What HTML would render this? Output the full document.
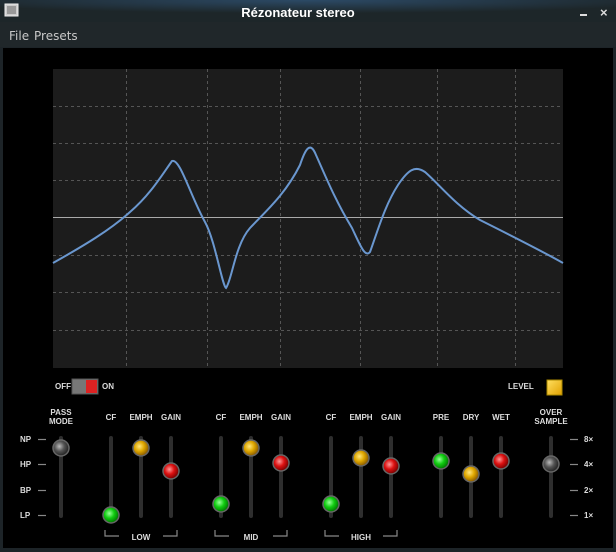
<!DOCTYPE html>
<html><head><meta charset="utf-8"><style>
body{margin:0;width:616px;height:552px;overflow:hidden;background:#1d2428;font-family:"Liberation Sans",sans-serif}
</style></head><body>
<svg width="616" height="552" xmlns="http://www.w3.org/2000/svg" style="position:absolute;left:0;top:0">
<defs>
<radialGradient id="tb" cx="0.5" cy="0" r="0.6"><stop offset="0" stop-color="#2c4a66"/><stop offset="1" stop-color="#1d2629"/></radialGradient>
<radialGradient id="kg" cx="0.4" cy="0.4" r="0.6"><stop offset="0" stop-color="#9f9"/><stop offset="0.5" stop-color="#1c1"/><stop offset="1" stop-color="#070"/></radialGradient>
<radialGradient id="ky" cx="0.4" cy="0.4" r="0.6"><stop offset="0" stop-color="#ffe680"/><stop offset="0.5" stop-color="#e0a800"/><stop offset="1" stop-color="#8a5a00"/></radialGradient>
<radialGradient id="kr" cx="0.4" cy="0.4" r="0.6"><stop offset="0" stop-color="#f99"/><stop offset="0.5" stop-color="#d11"/><stop offset="1" stop-color="#700"/></radialGradient>
<radialGradient id="kk" cx="0.4" cy="0.4" r="0.6"><stop offset="0" stop-color="#bbb"/><stop offset="0.5" stop-color="#555"/><stop offset="1" stop-color="#222"/></radialGradient>
<linearGradient id="lv" x1="0" y1="0" x2="1" y2="1"><stop offset="0" stop-color="#ffe060"/><stop offset="1" stop-color="#e0a000"/></linearGradient>
</defs>
<rect x="0" y="0" width="616" height="552" fill="#1d2428"/>
<rect x="0" y="0" width="616" height="22" fill="url(#tb)"/>
<rect x="5" y="4" width="13" height="12" fill="#ccc" stroke="#eee" stroke-width="1"/>
<rect x="7" y="6" width="9" height="8" fill="#999"/>
<text x="298" y="17" text-anchor="middle" font-size="13" font-weight="bold" fill="#fff">Rézonateur stereo</text>
<rect x="580" y="14" width="7" height="2" fill="#ddd"/>
<text x="600" y="17" font-size="13" font-weight="bold" fill="#ddd">×</text>
<rect x="0" y="22" width="616" height="25" fill="#20272a"/>
<text x="9" y="40" font-size="12" fill="#c8c8c8" font-family="DejaVu Sans, sans-serif">File</text>
<text x="34" y="40" font-size="12" fill="#c8c8c8" font-family="DejaVu Sans, sans-serif">Presets</text>
<rect x="3" y="48" width="610" height="500" fill="#000"/>
<rect x="53" y="69" width="510" height="299" fill="#1c1c1c"/>
<g stroke="#555" stroke-width="1" stroke-dasharray="3,3">
<line x1="53" y1="106.5" x2="563" y2="106.5"/><line x1="53" y1="143.5" x2="563" y2="143.5"/><line x1="53" y1="180.5" x2="563" y2="180.5"/>
<line x1="53" y1="255.5" x2="563" y2="255.5"/><line x1="53" y1="292.5" x2="563" y2="292.5"/><line x1="53" y1="330.5" x2="563" y2="330.5"/>
<line x1="126.5" y1="69" x2="126.5" y2="368"/><line x1="207.5" y1="69" x2="207.5" y2="368"/><line x1="280.5" y1="69" x2="280.5" y2="368"/>
<line x1="360.5" y1="69" x2="360.5" y2="368"/><line x1="437.5" y1="69" x2="437.5" y2="368"/><line x1="515.5" y1="69" x2="515.5" y2="368"/>
</g>
<line x1="53" y1="217.5" x2="563" y2="217.5" stroke="#aaa" stroke-width="1"/>
<path d="M53,263 C85,245 110,230 130,212 C150,195 162,175 172,161 C180,158 190,195 205,222 C215,240 222,285 226,288 C232,280 235,245 250,228 C265,212 285,195 300,165 C305,150 310,140 316,155 C325,175 335,200 352,228 C360,245 365,258 370,252 C378,230 385,205 398,185 C408,170 415,165 425,172 C440,185 455,205 480,220 C510,235 540,250 563,263" fill="none" stroke="#6a97cf" stroke-width="2"/>
<g font-size="8" font-weight="bold" fill="#ddd">
<text x="55" y="389">OFF</text><text x="102" y="389">ON</text>
<text x="508" y="389">LEVEL</text>
</g>
<rect x="72" y="379" width="26" height="15" fill="#777" stroke="#555"/>
<rect x="86" y="380" width="11" height="13" fill="#d22"/>
<rect x="547" y="380" width="15" height="15" fill="url(#lv)" stroke="#a80"/>
<g font-size="8" font-weight="bold" fill="#ddd" text-anchor="middle">
<text x="61" y="415">PASS</text><text x="61" y="424">MODE</text>
<text x="111" y="420">CF</text><text x="141" y="420">EMPH</text><text x="171" y="420">GAIN</text>
<text x="221" y="420">CF</text><text x="251" y="420">EMPH</text><text x="281" y="420">GAIN</text>
<text x="331" y="420">CF</text><text x="361" y="420">EMPH</text><text x="391" y="420">GAIN</text>
<text x="441" y="420">PRE</text><text x="471" y="420">DRY</text><text x="501" y="420">WET</text>
<text x="551" y="415">OVER</text><text x="551" y="424">SAMPLE</text>
<text x="141" y="540">LOW</text><text x="251" y="540">MID</text><text x="361" y="540">HIGH</text>
</g>
<g font-size="8" font-weight="bold" fill="#ddd">
<text x="20" y="442">NP</text><text x="20" y="467">HP</text><text x="20" y="493">BP</text><text x="20" y="518">LP</text>
<text x="584" y="442">8×</text><text x="584" y="467">4×</text><text x="584" y="493">2×</text><text x="584" y="518">1×</text>
</g>
<g stroke="#888" stroke-width="1.2">
<line x1="38" y1="439.5" x2="46" y2="439.5"/><line x1="38" y1="464.5" x2="46" y2="464.5"/><line x1="38" y1="490.5" x2="46" y2="490.5"/><line x1="38" y1="515.5" x2="46" y2="515.5"/>
<line x1="570" y1="439.5" x2="578" y2="439.5"/><line x1="570" y1="464.5" x2="578" y2="464.5"/><line x1="570" y1="490.5" x2="578" y2="490.5"/><line x1="570" y1="515.5" x2="578" y2="515.5"/>
</g>
<g fill="none" stroke="#888" stroke-width="1.2">
<path d="M105,530 V536 H119 M163,536 H177 V530"/>
<path d="M215,530 V536 H229 M273,536 H287 V530"/>
<path d="M325,530 V536 H339 M383,536 H397 V530"/>
</g>
<g fill="#2e2e2e">
<rect x="59" y="436" width="4" height="82" rx="2"/>
<rect x="109" y="436" width="4" height="82" rx="2"/><rect x="139" y="436" width="4" height="82" rx="2"/><rect x="169" y="436" width="4" height="82" rx="2"/>
<rect x="219" y="436" width="4" height="82" rx="2"/><rect x="249" y="436" width="4" height="82" rx="2"/><rect x="279" y="436" width="4" height="82" rx="2"/>
<rect x="329" y="436" width="4" height="82" rx="2"/><rect x="359" y="436" width="4" height="82" rx="2"/><rect x="389" y="436" width="4" height="82" rx="2"/>
<rect x="439" y="436" width="4" height="82" rx="2"/><rect x="469" y="436" width="4" height="82" rx="2"/><rect x="499" y="436" width="4" height="82" rx="2"/>
<rect x="549" y="436" width="4" height="82" rx="2"/>
</g>
<g stroke="#666" stroke-width="1.5">
<circle cx="61" cy="448" r="8" fill="url(#kk)"/>
<circle cx="111" cy="515" r="8" fill="url(#kg)"/><circle cx="141" cy="448" r="8" fill="url(#ky)"/><circle cx="171" cy="471" r="8" fill="url(#kr)"/>
<circle cx="221" cy="504" r="8" fill="url(#kg)"/><circle cx="251" cy="448" r="8" fill="url(#ky)"/><circle cx="281" cy="463" r="8" fill="url(#kr)"/>
<circle cx="331" cy="504" r="8" fill="url(#kg)"/><circle cx="361" cy="458" r="8" fill="url(#ky)"/><circle cx="391" cy="466" r="8" fill="url(#kr)"/>
<circle cx="441" cy="461" r="8" fill="url(#kg)"/><circle cx="471" cy="474" r="8" fill="url(#ky)"/><circle cx="501" cy="461" r="8" fill="url(#kr)"/>
<circle cx="551" cy="464" r="8" fill="url(#kk)"/>
</g>
</svg>
</body></html>
